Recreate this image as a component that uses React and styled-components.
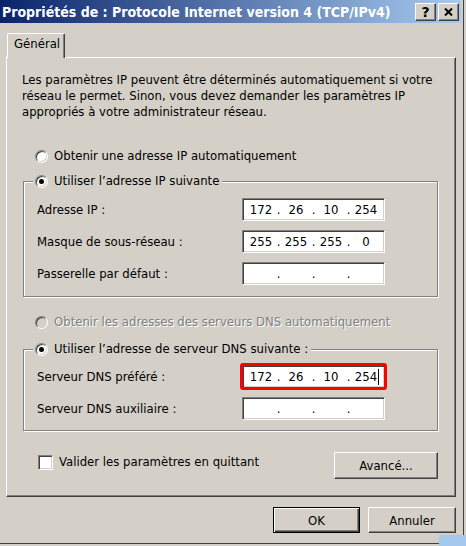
import React from "react";
import styled, { createGlobalStyle } from "styled-components";

const UI_FONT = `"DejaVu Sans Condensed", "DejaVu Sans", sans-serif`;

const GlobalStyle = createGlobalStyle`
  html, body {
    margin: 0;
    padding: 0;
    background: #d4d0c8;
  }
  body {
    font-family: ${UI_FONT};
    font-size: 13px;
    color: #000;
  }
  *, *::before, *::after {
    box-sizing: border-box;
  }
`;

const Window = styled.div`
  width: 464px;
  height: 544px;
  display: flex;
  flex-direction: column;
  background: #d4d0c8;
  border-right: 1px solid #404040;
  border-bottom: 1px solid #404040;
`;

const TitleBar = styled.div`
  height: 23px;
  margin-right: 2px;
  padding: 0 2px;
  display: flex;
  align-items: center;
  justify-content: space-between;
  background: linear-gradient(to right, #0a246a, #a6caf0);
`;

const Title = styled.span`
  color: #fff;
  font-weight: bold;
  font-size: 14px;
  white-space: nowrap;
`;

const CaptionButtons = styled.div`
  display: flex;
  gap: 2px;
`;

const CaptionButton = styled.div`
  width: 21px;
  height: 18px;
  display: flex;
  align-items: center;
  justify-content: center;
  background: #d4d0c8;
  border: 1px solid;
  border-color: #fff #404040 #404040 #fff;
  box-shadow: inset -1px -1px #808080;
  font-family: "DejaVu Sans", sans-serif;
  font-weight: bold;
  font-size: 14px;
  line-height: 1;
`;

const Body = styled.div`
  flex: 1;
  display: flex;
  flex-direction: column;
  padding: 10px 7px 0 6px;
`;

const Tab = styled.div`
  position: relative;
  z-index: 1;
  width: 58px;
  height: 25px;
  margin-left: 1px;
  margin-bottom: -1px;
  padding: 2px 0 0 6px;
  line-height: 16px;
  background: #d4d0c8;
  border-top: 1px solid #fff;
  border-left: 1px solid #fff;
  border-right: 1px solid #404040;
  border-radius: 2px 2px 0 0;
  box-shadow: inset -1px 0 #808080;
`;

const Panel = styled.div`
  width: 450px;
  height: 440px;
  display: flex;
  flex-direction: column;
  padding: 14px 17px 0 16px;
  border: 1px solid;
  border-color: #fff #404040 #404040 #fff;
  box-shadow: inset -1px -1px #808080;
`;

const Intro = styled.p`
  margin: 0 0 0 -1px;
  line-height: 16px;
  white-space: nowrap;
`;

const Choice = styled.label`
  display: flex;
  align-items: center;
  gap: 6px;
  height: 16px;
  line-height: 16px;
  white-space: nowrap;
  margin-top: ${(p) => p.$top || 0}px;
  padding-left: 12px;
  color: ${(p) => (p.$disabled ? "#808080" : "#000")};
  text-shadow: ${(p) => (p.$disabled ? "1px 1px 0 #fff" : "none")};
`;

const RadioMark = styled.span`
  position: relative;
  flex: none;
  width: 13px;
  height: 13px;
  border-radius: 50%;
  background: ${(p) => (p.$disabled ? "#d4d0c8" : "#fff")};
  border: 1px solid;
  border-color: #808080 #fff #fff #808080;
  box-shadow: inset 1px 1px #404040, inset -1px -1px #d4d0c8;

  &::after {
    content: "";
    display: ${(p) => (p.$checked ? "block" : "none")};
    position: absolute;
    left: 3px;
    top: 3px;
    width: 5px;
    height: 5px;
    border-radius: 50%;
    background: #000;
  }
`;

const Group = styled.fieldset`
  margin: ${(p) => p.$top}px 0 0;
  padding: ${(p) => p.$padTop}px 0 ${(p) => p.$padBottom}px 13px;
  min-inline-size: 0;
  border: 1px solid #808080;
  box-shadow: 1px 1px 0 #fff, inset 1px 1px 0 #fff;
`;

const GroupLegend = styled.legend`
  display: flex;
  align-items: center;
  gap: 6px;
  height: 16px;
  margin-left: -4px;
  padding: 0 3px 0 2px;
  line-height: 16px;
  white-space: nowrap;
  background: #d4d0c8;
`;

const Rows = styled.div`
  display: flex;
  flex-direction: column;
  gap: 9px;
`;

const FieldRow = styled.div`
  display: grid;
  grid-template-columns: 205px 143px;
  align-items: center;
  height: 23px;
  white-space: nowrap;
`;

const IpBox = styled.div`
  width: 143px;
  height: 23px;
  display: flex;
  align-items: center;
  padding-left: 4px;
  background: #fff;
  border: 1px solid;
  border-color: #808080 #fff #fff #808080;
  box-shadow: inset 1px 1px #404040, inset -1px -1px #d4d0c8;
  outline: ${(p) => (p.$highlight ? "3px solid #ff0000" : "none")};
  outline-offset: -1px;
  border-radius: ${(p) => (p.$highlight ? "1px" : "0")};
`;

const Octet = styled.span`
  width: 28px;
  text-align: center;
  line-height: 16px;
`;

const Dot = styled.span`
  width: 7px;
  text-align: center;
  line-height: 16px;
`;

const Caret = styled.span`
  position: relative;

  &::after {
    content: "";
    position: absolute;
    right: -2px;
    top: 0;
    width: 1px;
    height: 16px;
    background: #000;
  }
`;

const Bottom = styled.div`
  display: flex;
  justify-content: space-between;
  align-items: flex-start;
  margin-top: 21px;
`;

const CheckLabel = styled.label`
  display: flex;
  align-items: center;
  gap: 6px;
  margin-top: 2px;
  padding-left: 15px;
  line-height: 16px;
  white-space: nowrap;
`;

const CheckMark = styled.span`
  width: 15px;
  height: 15px;
  flex: none;
  background: #fff;
  border: 1px solid;
  border-color: #808080 #fff #fff #808080;
  box-shadow: inset 1px 1px #404040, inset -1px -1px #d4d0c8;
`;

const Button = styled.button`
  width: ${(p) => p.$w}px;
  height: ${(p) => p.$h}px;
  padding: 0;
  font: inherit;
  color: #000;
  background: #d4d0c8;
  border: 1px solid;
  border-color: ${(p) =>
    p.$default ? "#000" : "#fff #404040 #404040 #fff"};
  box-shadow: ${(p) =>
    p.$default
      ? "inset 1px 1px #fff, inset -1px -1px #404040, inset -2px -2px #808080"
      : "inset -1px -1px #808080"};
`;

const Footer = styled.div`
  display: flex;
  justify-content: flex-end;
  gap: 8px;
  margin-top: 10px;
`;

const BackdropCorner = styled.div`
  position: absolute;
  left: 439px;
  top: 535px;
  width: 27px;
  height: 11px;
  background: #a4c8ee;
`;

function Radio({ checked, disabled }) {
  return <RadioMark $checked={checked} $disabled={disabled} />;
}

function IpField({ value, highlight }) {
  const parts = value ? value.split(".") : ["", "", "", ""];
  return (
    <IpBox $highlight={highlight}>
      {parts.map((part, i) => (
        <React.Fragment key={i}>
          <Octet>
            {highlight && i === 3 ? <Caret>{part}</Caret> : part}
          </Octet>
          {i < 3 && <Dot>.</Dot>}
        </React.Fragment>
      ))}
    </IpBox>
  );
}

export default function App() {
  return (
    <>
      <GlobalStyle />
      <Window>
        <TitleBar>
          <Title>Propriétés de : Protocole Internet version 4 (TCP/IPv4)</Title>
          <CaptionButtons>
            <CaptionButton>?</CaptionButton>
            <CaptionButton>
              <svg width="9" height="8" viewBox="0 0 9 8">
                <path d="M1 0.5 L8 7.5 M8 0.5 L1 7.5" stroke="#000" strokeWidth="2" />
              </svg>
            </CaptionButton>
          </CaptionButtons>
        </TitleBar>

        <Body>
          <Tab>Général</Tab>
          <Panel>
            <Intro>
              Les paramètres IP peuvent être déterminés automatiquement si votre
              <br />
              réseau le permet. Sinon, vous devez demander les paramètres IP
              <br />
              appropriés à votre administrateur réseau.
            </Intro>

            <Choice $top={28}>
              <Radio />
              Obtenir une adresse IP automatiquement
            </Choice>

            <Group $top={9} $padTop={9} $padBottom={11}>
              <GroupLegend>
                <Radio checked />
                Utiliser l’adresse IP suivante
              </GroupLegend>
              <Rows>
                <FieldRow>
                  <span>Adresse IP :</span>
                  <IpField value="172.26.10.254" />
                </FieldRow>
                <FieldRow>
                  <span>Masque de sous-réseau :</span>
                  <IpField value="255.255.255.0" />
                </FieldRow>
                <FieldRow>
                  <span>Passerelle par défaut :</span>
                  <IpField />
                </FieldRow>
              </Rows>
            </Group>

            <Choice $top={17} $disabled>
              <Radio disabled />
              Obtenir les adresses des serveurs DNS automatiquement
            </Choice>

            <Group $top={11} $padTop={8} $padBottom={10}>
              <GroupLegend>
                <Radio checked />
                Utiliser l’adresse de serveur DNS suivante :
              </GroupLegend>
              <Rows>
                <FieldRow>
                  <span>Serveur DNS préféré :</span>
                  <IpField value="172.26.10.254" highlight />
                </FieldRow>
                <FieldRow>
                  <span>Serveur DNS auxiliaire :</span>
                  <IpField />
                </FieldRow>
              </Rows>
            </Group>

            <Bottom>
              <CheckLabel>
                <CheckMark />
                Valider les paramètres en quittant
              </CheckLabel>
              <Button $w={104} $h={27}>Avancé...</Button>
            </Bottom>
          </Panel>

          <Footer>
            <Button $w={87} $h={26} $default>OK</Button>
            <Button $w={88} $h={26}>Annuler</Button>
          </Footer>
        </Body>
      </Window>
      <BackdropCorner />
    </>
  );
}
